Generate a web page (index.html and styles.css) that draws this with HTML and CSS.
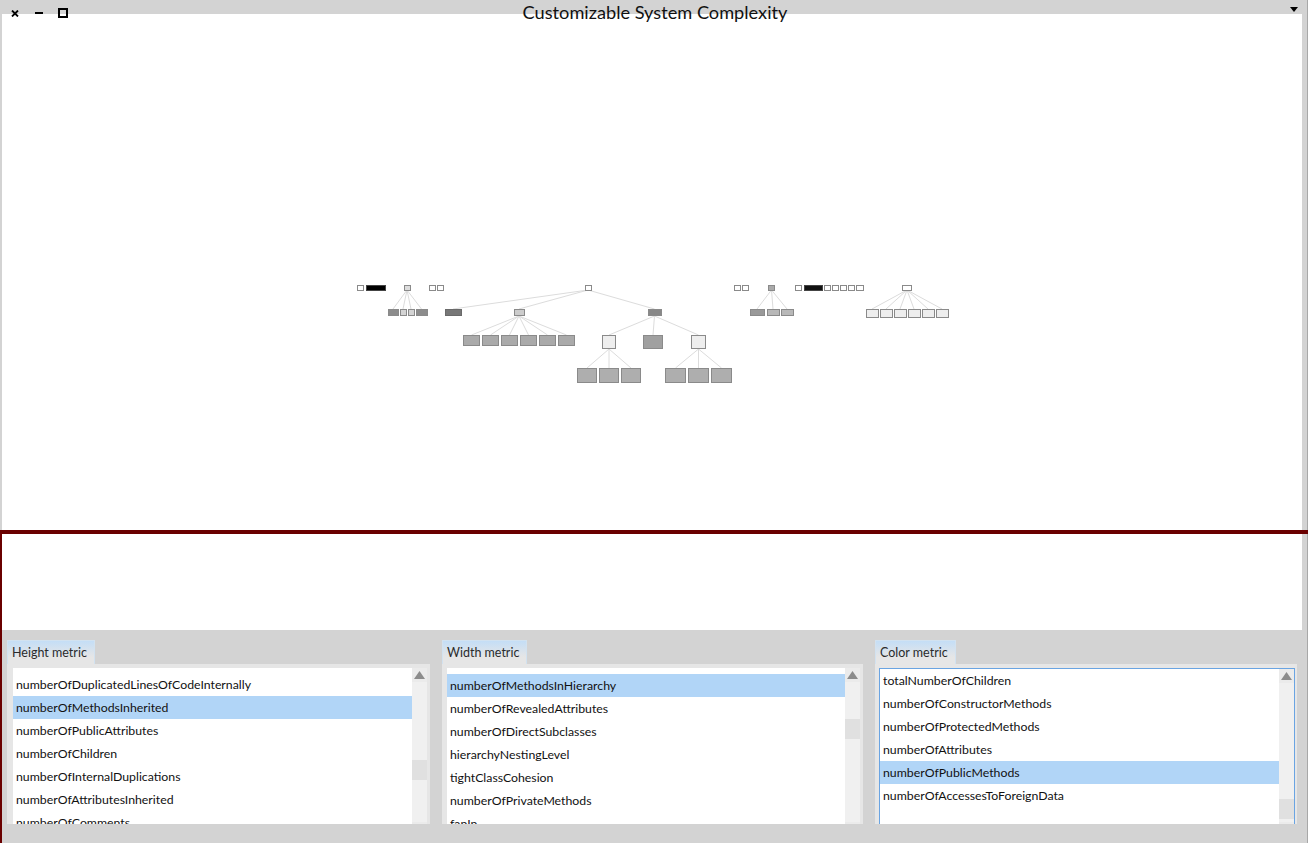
FILE: index.html
```html
<!DOCTYPE html>
<html>
<head>
<meta charset="utf-8">
<title>Customizable System Complexity</title>
<link rel="stylesheet" href="styles.css">
</head>
<body>
<div class="window">
  <div class="titlebar">
    <div class="controls">
      <svg class="ctl ctl-close" width="8" height="7" viewBox="0 0 8 7"><path d="M1 0.5 L7 6.5 M7 0.5 L1 6.5" stroke="#000" stroke-width="1.8"/></svg>
      <svg class="ctl ctl-min" width="8" height="2" viewBox="0 0 8 2"><rect x="0" y="0" width="8" height="2" fill="#000"/></svg>
      <svg class="ctl ctl-max" width="10" height="10" viewBox="0 0 10 10"><rect x="1" y="1" width="8" height="8" fill="none" stroke="#000" stroke-width="2"/></svg>
    </div>
    <div class="title">Customizable System Complexity</div>
    <svg class="menu-arrow" width="8" height="5" viewBox="0 0 8 5"><path d="M0 0 H8 L4 5 Z" fill="#000"/></svg>
  </div>

  <div class="canvas">
    <svg class="graph" width="1300" height="516" viewBox="2 14 1300 516" shape-rendering="crispEdges">
      <g class="edges" stroke="#dcdcdc" stroke-width="1" shape-rendering="auto">
        <line x1="407" y1="290" x2="393" y2="309"/>
        <line x1="407" y1="290" x2="403" y2="309"/>
        <line x1="407" y1="290" x2="411" y2="309"/>
        <line x1="407" y1="290" x2="421.5" y2="309"/>
        <line x1="588" y1="290" x2="453" y2="309"/>
        <line x1="588" y1="290" x2="519" y2="309"/>
        <line x1="588" y1="290" x2="654.5" y2="309"/>
        <line x1="519" y1="316" x2="471.5" y2="335"/>
        <line x1="519" y1="316" x2="490.5" y2="335"/>
        <line x1="519" y1="316" x2="509.5" y2="335"/>
        <line x1="519" y1="316" x2="528.5" y2="335"/>
        <line x1="519" y1="316" x2="547.5" y2="335"/>
        <line x1="519" y1="316" x2="566.5" y2="335"/>
        <line x1="654.5" y1="316" x2="609" y2="335"/>
        <line x1="654.5" y1="316" x2="653" y2="335"/>
        <line x1="654.5" y1="316" x2="698.5" y2="335"/>
        <line x1="609" y1="349" x2="587" y2="368"/>
        <line x1="609" y1="349" x2="609" y2="368"/>
        <line x1="609" y1="349" x2="631" y2="368"/>
        <line x1="698.5" y1="349" x2="675.5" y2="368"/>
        <line x1="698.5" y1="349" x2="698.5" y2="368"/>
        <line x1="698.5" y1="349" x2="721.5" y2="368"/>
        <line x1="771.5" y1="290" x2="757" y2="309"/>
        <line x1="771.5" y1="290" x2="773" y2="309"/>
        <line x1="771.5" y1="290" x2="787" y2="309"/>
        <line x1="907" y1="290" x2="872" y2="309"/>
        <line x1="907" y1="290" x2="886" y2="309"/>
        <line x1="907" y1="290" x2="900" y2="309"/>
        <line x1="907" y1="290" x2="914" y2="309"/>
        <line x1="907" y1="290" x2="928" y2="309"/>
        <line x1="907" y1="290" x2="942" y2="309"/>
      </g>
      <g class="nodes" stroke="#8a8a8a" stroke-width="1">
        <rect x="357.5" y="285.5" width="6" height="5" fill="#ffffff"/>
        <rect x="366.5" y="285.5" width="19" height="5" fill="#000000" stroke="#444"/>
        <rect x="404.5" y="285.5" width="6" height="5" fill="#dddddd"/>
        <rect x="429.5" y="285.5" width="6" height="5" fill="#ffffff"/>
        <rect x="437.5" y="285.5" width="6" height="5" fill="#ffffff"/>
        <rect x="585.5" y="285.5" width="6" height="5" fill="#ffffff"/>
        <rect x="734.5" y="285.5" width="6" height="5" fill="#ffffff"/>
        <rect x="742.5" y="285.5" width="6" height="5" fill="#ffffff"/>
        <rect x="768.5" y="285.5" width="6" height="5" fill="#aaaaaa"/>
        <rect x="795.5" y="285.5" width="6" height="5" fill="#ffffff"/>
        <rect x="804.5" y="285.5" width="18" height="5" fill="#111111" stroke="#444"/>
        <rect x="824.5" y="285.5" width="6" height="5" fill="#ffffff"/>
        <rect x="832.5" y="285.5" width="6" height="5" fill="#ffffff"/>
        <rect x="840.5" y="285.5" width="6" height="5" fill="#ffffff"/>
        <rect x="848.5" y="285.5" width="6" height="5" fill="#ffffff"/>
        <rect x="856.5" y="285.5" width="7" height="5" fill="#ffffff"/>
        <rect x="902.5" y="285.5" width="9" height="5" fill="#ffffff"/>
        <rect x="388.5" y="309.5" width="10" height="6" fill="#8c8c8c"/>
        <rect x="400.5" y="309.5" width="6" height="6" fill="#d4d4d4"/>
        <rect x="408.5" y="309.5" width="6" height="6" fill="#d4d4d4"/>
        <rect x="416.5" y="309.5" width="11" height="6" fill="#8c8c8c"/>
        <rect x="445.5" y="309.5" width="16" height="6" fill="#777777" stroke="#6a6a6a"/>
        <rect x="514.5" y="309.5" width="10" height="6" fill="#cccccc"/>
        <rect x="648.5" y="309.5" width="13" height="6" fill="#888888"/>
        <rect x="750.5" y="309.5" width="14" height="6" fill="#999999"/>
        <rect x="767.5" y="309.5" width="12" height="6" fill="#b8b8b8"/>
        <rect x="781.5" y="309.5" width="12" height="6" fill="#b8b8b8"/>
        <rect x="866.5" y="309.5" width="12" height="8" fill="#eeeeee"/>
        <rect x="880.5" y="309.5" width="12" height="8" fill="#eeeeee"/>
        <rect x="894.5" y="309.5" width="12" height="8" fill="#eeeeee"/>
        <rect x="908.5" y="309.5" width="12" height="8" fill="#eeeeee"/>
        <rect x="922.5" y="309.5" width="12" height="8" fill="#eeeeee"/>
        <rect x="936.5" y="309.5" width="12" height="8" fill="#eeeeee"/>
        <rect x="463.5" y="335.5" width="16" height="10" fill="#aaaaaa"/>
        <rect x="482.5" y="335.5" width="16" height="10" fill="#aaaaaa"/>
        <rect x="501.5" y="335.5" width="16" height="10" fill="#aaaaaa"/>
        <rect x="520.5" y="335.5" width="16" height="10" fill="#aaaaaa"/>
        <rect x="539.5" y="335.5" width="16" height="10" fill="#aaaaaa"/>
        <rect x="558.5" y="335.5" width="16" height="10" fill="#aaaaaa"/>
        <rect x="602.5" y="335.5" width="13" height="13" fill="#eeeeee"/>
        <rect x="643.5" y="335.5" width="19" height="13" fill="#a0a0a0"/>
        <rect x="691.5" y="335.5" width="14" height="13" fill="#eeeeee"/>
        <rect x="577.5" y="368.5" width="19" height="14" fill="#aeaeae"/>
        <rect x="599.5" y="368.5" width="19" height="14" fill="#aeaeae"/>
        <rect x="621.5" y="368.5" width="19" height="14" fill="#aeaeae"/>
        <rect x="665.5" y="368.5" width="20" height="14" fill="#aeaeae"/>
        <rect x="688.5" y="368.5" width="20" height="14" fill="#aeaeae"/>
        <rect x="711.5" y="368.5" width="20" height="14" fill="#aeaeae"/>
      </g>
    </svg>
  </div>

  <div class="divider"></div>

  <div class="lower">
    <div class="blank"></div>
    <div class="panels">
      <div class="panel">
        <div class="tab">Height metric</div>
        <div class="panel-body panel-body-first">
          <div class="list">
            <div class="items items-h">
              <div class="item">numberOfDuplicatedLinesOfCodeInternally</div>
              <div class="item selected">numberOfMethodsInherited</div>
              <div class="item">numberOfPublicAttributes</div>
              <div class="item">numberOfChildren</div>
              <div class="item">numberOfInternalDuplications</div>
              <div class="item">numberOfAttributesInherited</div>
              <div class="item">numberOfComments</div>
            </div>
            <div class="scrollbar">
              <div class="arrow"><svg width="11" height="8" viewBox="0 0 11 8"><path d="M0 8 L5.5 0 L11 8 Z" fill="#8c8c8c"/></svg></div>
              <div class="track track-h"><div class="thumb"></div></div>
              <div class="arrow"><svg width="11" height="8" viewBox="0 0 11 8"><path d="M0 0 L5.5 8 L11 0 Z" fill="#8c8c8c"/></svg></div>
            </div>
          </div>
        </div>
      </div>

      <div class="panel">
        <div class="tab">Width metric</div>
        <div class="panel-body">
          <div class="list">
            <div class="items items-w">
              <div class="item selected">numberOfMethodsInHierarchy</div>
              <div class="item">numberOfRevealedAttributes</div>
              <div class="item">numberOfDirectSubclasses</div>
              <div class="item">hierarchyNestingLevel</div>
              <div class="item">tightClassCohesion</div>
              <div class="item">numberOfPrivateMethods</div>
              <div class="item">fanIn</div>
            </div>
            <div class="scrollbar">
              <div class="arrow"><svg width="11" height="8" viewBox="0 0 11 8"><path d="M0 8 L5.5 0 L11 8 Z" fill="#8c8c8c"/></svg></div>
              <div class="track track-w"><div class="thumb"></div></div>
              <div class="arrow"><svg width="11" height="8" viewBox="0 0 11 8"><path d="M0 0 L5.5 8 L11 0 Z" fill="#8c8c8c"/></svg></div>
            </div>
          </div>
        </div>
      </div>

      <div class="panel">
        <div class="tab">Color metric</div>
        <div class="panel-body">
          <div class="list focused">
            <div class="items items-c">
              <div class="item">totalNumberOfChildren</div>
              <div class="item">numberOfConstructorMethods</div>
              <div class="item">numberOfProtectedMethods</div>
              <div class="item">numberOfAttributes</div>
              <div class="item selected">numberOfPublicMethods</div>
              <div class="item">numberOfAccessesToForeignData</div>
            </div>
            <div class="scrollbar">
              <div class="arrow"><svg width="11" height="8" viewBox="0 0 11 8"><path d="M0 8 L5.5 0 L11 8 Z" fill="#8c8c8c"/></svg></div>
              <div class="track track-c"><div class="thumb"></div></div>
              <div class="arrow"><svg width="11" height="8" viewBox="0 0 11 8"><path d="M0 0 L5.5 8 L11 0 Z" fill="#8c8c8c"/></svg></div>
            </div>
          </div>
        </div>
      </div>
    </div>
  </div>
</div>
</body>
</html>
```

FILE: styles.css
```css
* { box-sizing: border-box; }
html, body { margin: 0; padding: 0; }
body {
  width: 1308px;
  height: 843px;
  overflow: hidden;
  background: #d3d3d3;
  font-family: Lato, "Open Sans", sans-serif;
  color: #1a1a1a;
}
.window {
  width: 1308px;
  height: 843px;
  display: flex;
  flex-direction: column;
  background: #d3d3d3;
  border-right: 1px solid #a8a8a8;
}

/* title bar */
.titlebar {
  height: 14px;
  flex: none;
  display: flex;
  align-items: flex-start;
  position: relative;
  z-index: 2;
}
.controls {
  display: flex;
  align-items: flex-start;
  padding-left: 11px;
  width: 120px;
  flex: none;
}
.ctl { display: block; flex: none; }
.ctl-close { margin-top: 10px; }
.ctl-min { margin-top: 12px; margin-left: 16px; }
.ctl-max { margin-top: 8px; margin-left: 15px; }
.title {
  flex: 1;
  text-align: center;
  font-size: 18.2px;
  line-height: 24px;
  color: #111;
  padding-right: 100px;
  white-space: nowrap;
}
.menu-arrow {
  flex: none;
  margin-top: 7px;
  margin-right: 9px;
}

/* canvas */
.canvas {
  height: 516px;
  flex: none;
  margin-left: 2px;
  margin-right: 5px;
  background: #fff;
}
.graph { display: block; }

.divider {
  height: 4px;
  flex: none;
  background: #6a0000;
  margin-right: -1px;
}

/* lower area */
.lower {
  flex: 1;
  display: flex;
  flex-direction: column;
  border-left: 2px solid #6a0000;
  margin-right: 5px;
  min-height: 0;
}
.blank {
  height: 96px;
  flex: none;
  background: #fff;
}
.panels {
  flex: 1;
  display: grid;
  grid-template-columns: 423px 421px 422px;
  column-gap: 12px;
  padding: 10px 0 0 5px;
  align-items: start;
}
.panel {
  display: flex;
  flex-direction: column;
  align-items: flex-start;
}
.tab {
  height: 24px;
  padding: 0 7px 0 4px;
  font-size: 12.5px;
  line-height: 24px;
  color: #2b2b2b;
  background: linear-gradient(#c4def6, #e6e6e6 70%);
  border: 1px solid #d2e2f0;
  border-bottom: none;
}
.panel-body {
  align-self: stretch;
  height: 160px;
  background: #e6e6e6;
  padding: 4px 3px 0 5px;
  display: flex;
  align-items: flex-start;
  overflow: hidden;
}
.panel-body-first { padding-left: 6px; }
.list {
  flex: 1;
  height: 168px;
  flex-shrink: 0;
  display: flex;
  background: #fff;
  overflow: hidden;
}
.list.focused {
  border: 1px solid #6aa4e2;
  border-bottom: none;
  margin-left: -1px;
  margin-right: -1px;
}
.items {
  flex: 1;
  overflow: hidden;
}
.items-h { padding-top: 5px; }
.items-w { padding-top: 6px; }
.items-c { padding-top: 0; }
.item {
  height: 23px;
  line-height: 23px;
  padding-left: 3px;
  font-size: 12.3px;
  color: #111;
  white-space: nowrap;
}
.item.selected { background: #b1d5f7; }

.scrollbar {
  width: 15px;
  flex: none;
  display: flex;
  flex-direction: column;
  background: #f0f0f0;
}
.arrow {
  height: 14px;
  flex: none;
  display: flex;
  align-items: center;
  justify-content: center;
  background: #ebebeb;
}
.track {
  flex: 1;
  display: flex;
  flex-direction: column;
}
.thumb {
  height: 20px;
  background: #e0e0e0;
}
.track-h { padding-top: 78px; }
.track-w { padding-top: 37px; }
.track-c { padding-top: 116px; }
```
